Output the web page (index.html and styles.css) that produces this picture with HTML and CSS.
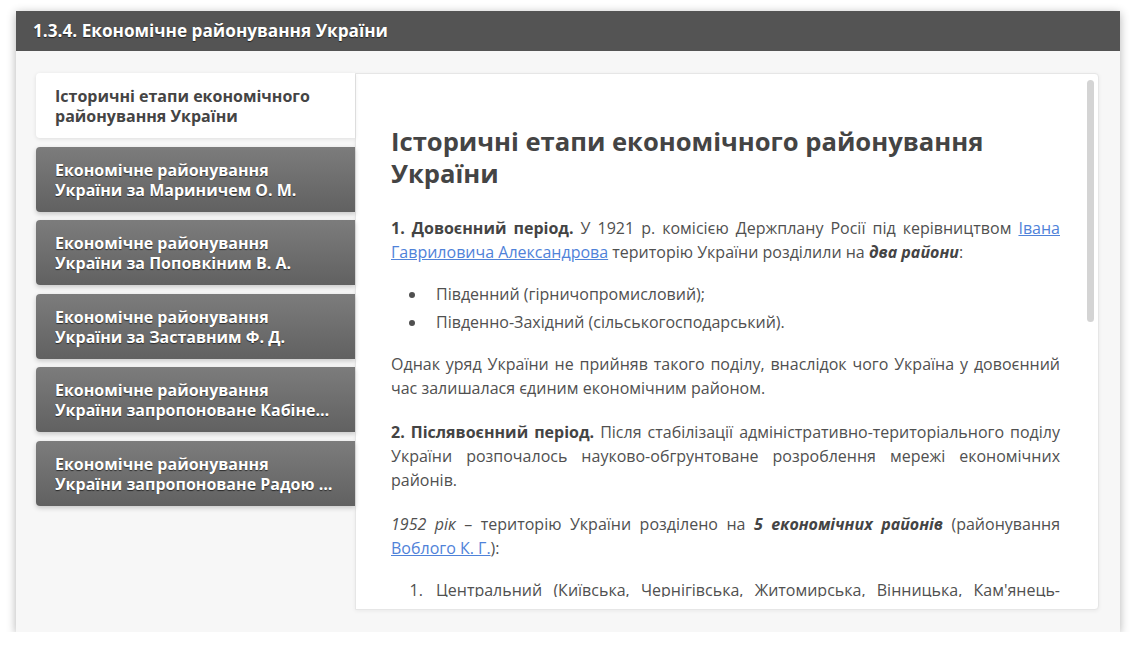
FILE: index.html
```html
<!DOCTYPE html>
<html lang="uk">
<head>
<meta charset="utf-8">
<title>1.3.4. Економічне районування України</title>
<link rel="stylesheet" href="styles.css">
</head>
<body>
<div class="window">
  <div class="window-header">1.3.4. Економічне районування України</div>
  <div class="window-body">
    <nav class="tabs">
      <div class="tab tab-active"><span class="tab-line">Історичні етапи економічного</span><span class="tab-line">районування України</span></div>
      <div class="tab"><span class="tab-line">Економічне районування</span><span class="tab-line">України за Мариничем О. М.</span></div>
      <div class="tab"><span class="tab-line">Економічне районування</span><span class="tab-line">України за Поповкіним В. А.</span></div>
      <div class="tab"><span class="tab-line">Економічне районування</span><span class="tab-line">України за Заставним Ф. Д.</span></div>
      <div class="tab"><span class="tab-line">Економічне районування</span><span class="tab-line">України запропоноване Кабінетом Міністрів України</span></div>
      <div class="tab"><span class="tab-line">Економічне районування</span><span class="tab-line">України запропоноване Радою по вивченню продуктивних сил України</span></div>
    </nav>
    <section class="panel">
      <div class="scroller">
        <article class="article">
          <h2 class="article-title">Історичні етапи економічного районування України</h2>
          <p><b>1. Довоєнний період.</b> У 1921 р. комісією Держплану Росії під керівництвом <a href="#">Івана Гавриловича Александрова</a> територію України розділили на <b><i>два райони</i></b>:</p>
          <ul class="bullets">
            <li>Південний (гірничопромисловий);</li>
            <li>Південно-Західний (сільськогосподарський).</li>
          </ul>
          <p>Однак уряд України не прийняв такого поділу, внаслідок чого Україна у довоєнний час залишалася єдиним економічним районом.</p>
          <p><b>2. Післявоєнний період.</b> Після стабілізації адміністративно-територіального поділу України розпочалось науково-обгрунтоване розроблення мережі економічних районів.</p>
          <p><i>1952 рік</i> – територію України розділено на <b><i>5 економічних районів</i></b> (районування <a href="#">Воблого К. Г.</a>):</p>
          <ol class="numbers">
            <li>Центральний (Київська, Чернігівська, Житомирська, Вінницька, Кам'янець-Подільська, Черкаська, Кіровоградська області);</li>
            <li>Західний (Львівська, Дрогобицька, Станіславська, Тернопільська, Волинська, Ровенська, Чернівецька, Закарпатська області);</li>
            <li>Донецько-Придніпровський (Дніпропетровська, Запорізька, Сталінська, Ворошиловградська області);</li>
            <li>Південний (Одеська, Миколаївська, Херсонська, Кримська області);</li>
            <li>Північно-Східний (Харківська, Сумська, Полтавська області).</li>
          </ol>
        </article>
      </div>
      <span class="scroll-thumb" aria-hidden="true"></span>
    </section>
  </div>
</div>
</body>
</html>
```
FILE: styles.css
```css
* { box-sizing: border-box; }

html, body {
  margin: 0;
  padding: 0;
  background: #ffffff;
  font-family: "Open Sans", "Noto Sans", sans-serif;
}

.window {
  margin: 11px 16px 0 16px;
  width: 1104px;
  height: 621px;
  background: #f7f7f7;
  box-shadow: 0 2px 9px rgba(0, 0, 0, 0.3);
  display: flex;
  flex-direction: column;
}

.window-header {
  height: 40px;
  flex: none;
  background: #545454;
  color: #ffffff;
  font-weight: 700;
  font-size: 17.2px;
  line-height: 40px;
  padding-left: 17px;
  text-shadow: 0 1px 1px rgba(0, 0, 0, 0.6);
}

.window-body {
  flex: 1;
  display: flex;
  padding: 22px 21px 22px 20px;
  min-height: 0;
}

.tabs {
  width: 319px;
  flex: none;
  display: flex;
  flex-direction: column;
  gap: 8.6px;
  position: relative;
  z-index: 2;
}

.tab {
  height: 65px;
  padding: 13px 18px 12px 19px;
  border-radius: 4px 0 0 4px;
  background: linear-gradient(#7c7c7c, #616161);
  color: #ffffff;
  font-weight: 700;
  font-size: 16px;
  line-height: 20px;
  text-shadow: 0 1px 1px rgba(0, 0, 0, 0.6);
  box-shadow: 0 2px 5px rgba(0, 0, 0, 0.2);
}

.tab-line {
  display: block;
  white-space: nowrap;
  overflow: hidden;
  text-overflow: ellipsis;
}

.tab-active {
  background: #ffffff;
  color: #444444;
  text-shadow: none;
  box-shadow: 0 1px 4px rgba(0, 0, 0, 0.1);
}

.panel {
  flex: 1;
  position: relative;
  background: #ffffff;
  border: 1px solid #e6e6e6;
  border-radius: 0 4px 4px 0;
  padding: 6px 4px 12px 0;
  box-shadow: 0 1px 4px rgba(0, 0, 0, 0.06);
  min-height: 0;
  display: flex;
}

.scroller {
  flex: 1;
  overflow: hidden;
}

.scroll-thumb {
  position: absolute;
  top: 6px;
  right: 4px;
  width: 7px;
  height: 242px;
  background: #d4d4d4;
  border-radius: 4px;
}

.article {
  padding: 46px 34px 40px 35px;
  color: #505050;
  font-size: 16px;
  line-height: 24px;
  text-align: justify;
}

.article-title {
  margin: 0 0 26px 0;
  color: #444444;
  font-size: 25.6px;
  line-height: 32px;
  font-weight: 700;
  text-align: left;
}

.article p {
  margin: 0 0 20px 0;
}

.article b { color: #444444; }

.article a {
  color: #4f82d9;
  text-decoration: underline;
}

.bullets {
  margin: -2px 0 18px 0;
  padding-left: 36px;
}

.bullets li {
  margin-bottom: 4px;
  padding-left: 9px;
}

.numbers {
  margin: -2px 0 18px 0;
  padding-left: 36px;
}

.numbers li {
  margin-bottom: 4px;
  padding-left: 9px;
}
```
